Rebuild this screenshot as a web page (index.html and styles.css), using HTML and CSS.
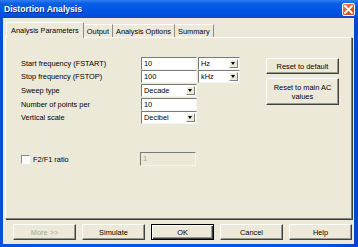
FILE: index.html
```html
<!DOCTYPE html>
<html>
<head>
<meta charset="utf-8">
<link rel="stylesheet" href="styles.css">
</head>
<body>
<div class="window">
  <div class="titlebar">
    <span class="title">Distortion Analysis</span>
    <span class="close"><svg width="9" height="9" viewBox="0 0 9 9"><path d="M1 1 L8 8 M8 1 L1 8" stroke="#fff" stroke-width="1.8" stroke-linecap="square"/></svg></span>
  </div>
  <div class="client">
    <div class="tabs">
      <div class="tab active">Analysis Parameters</div>
      <div class="tab">Output</div>
      <div class="tab">Analysis Options</div>
      <div class="tab">Summary</div>
    </div>
    <div class="panel">
      <div class="main">
        <div class="form">
          <div class="label">Start frequency (FSTART)</div>
          <div class="field">10</div>
          <div class="combo unit"><span>Hz</span><span class="arrow"></span></div>

          <div class="label">Stop frequency (FSTOP)</div>
          <div class="field">100</div>
          <div class="combo unit"><span>kHz</span><span class="arrow"></span></div>

          <div class="label">Sweep type</div>
          <div class="combo"><span>Decade</span><span class="arrow"></span></div>
          <div></div>

          <div class="label">Number of points per</div>
          <div class="field">10</div>
          <div></div>

          <div class="label">Vertical scale</div>
          <div class="combo"><span>Decibel</span><span class="arrow"></span></div>
          <div></div>
        </div>
        <div class="side">
          <div class="btn small">Reset to default</div>
          <div class="btn tall">Reset to main AC<br>values</div>
        </div>
      </div>
      <div class="ratio">
        <div class="check"><span class="box"></span><span>F2/F1 ratio</span></div>
        <div class="field disabled">1</div>
      </div>
    </div>
    <div class="buttons">
      <div class="btn bottom disabled-text">More &gt;&gt;</div>
      <div class="btn bottom">Simulate</div>
      <div class="btn bottom default">OK</div>
      <div class="btn bottom">Cancel</div>
      <div class="btn bottom">Help</div>
    </div>
  </div>
</div>
</body>
</html>
```

FILE: styles.css
```css
html, body {
  margin: 0;
  padding: 0;
  background: #ffffff;
}

body {
  font-family: "Liberation Sans", Arial, sans-serif;
  font-size: 7.4px;
  color: #000;
}

.window {
  width: 358px;
  height: 247px;
  background: linear-gradient(to right, #0a4fd6, #0054e3 10%, #0054e3 90%, #0846c8);
  display: flex;
  flex-direction: column;
  box-sizing: border-box;
}

.titlebar {
  height: 18px;
  flex: none;
  display: flex;
  align-items: center;
  justify-content: space-between;
  padding: 0 3px 0 4px;
  background: linear-gradient(to bottom, #2f7ff0 0%, #0a5ee6 20%, #0055e5 55%, #0050dc 85%, #0a48c8 100%);
}

.title {
  color: #fff;
  font-weight: bold;
  font-size: 8.6px;
  text-shadow: 1px 1px 0 #0a2d86;
}

.close {
  width: 13px;
  height: 13px;
  box-sizing: border-box;
  border: 1px solid #fff;
  border-radius: 2px;
  background: linear-gradient(to bottom right, #f08a60, #e05a2c 50%, #c8421e);
  display: flex;
  align-items: center;
  justify-content: center;
}

.client {
  flex: 1;
  margin: 0 4px 3px 3px;
  background: #ece9d8;
  padding: 4px 2px 4px 2px;
  display: flex;
  flex-direction: column;
}

.tabs {
  height: 15px;
  display: flex;
  align-items: flex-end;
  padding-left: 1px;
  position: relative;
  z-index: 1;
}

.tab {
  height: 13px;
  box-sizing: border-box;
  padding: 2px 3px 0 3px;
  border-top: 1px solid #fff;
  border-right: 1px solid #8a8a8a;
  white-space: nowrap;
  line-height: 10px;
}

.tab.active {
  height: 16px;
  margin-bottom: -1px;
  padding: 3px 4px 0 4px;
  border-left: 1px solid #fff;
  background: #ece9d8;
}

.panel {
  height: 182px;
  box-sizing: border-box;
  border-top: 1px solid #fff;
  border-left: 1px solid #fff;
  border-right: 1px solid #808080;
  border-bottom: 1px solid #808080;
  box-shadow: 1px 1px 0 #404040;
  padding: 19px 0 0 15px;
}

.main {
  display: flex;
}

.form {
  display: grid;
  grid-template-columns: 119px 56px 42px;
  grid-template-rows: 13px 14px 14px 13px 13px;
  column-gap: 1px;
  align-items: start;
}

.label {
  height: 13px;
  line-height: 13px;
  white-space: nowrap;
}

.field, .combo {
  height: 13px;
  box-sizing: border-box;
  background: #fff;
  border-top: 1px solid #7b7b7b;
  border-left: 1px solid #7b7b7b;
  border-right: 1px solid #f4f3ee;
  border-bottom: 1px solid #f4f3ee;
  padding-left: 2px;
  line-height: 11px;
}

.combo {
  display: flex;
  justify-content: space-between;
  padding-right: 1px;
}

.arrow {
  width: 9px;
  height: 9px;
  margin-top: 1px;
  box-sizing: border-box;
  background: #ece9d8;
  border-top: 1px solid #fff;
  border-left: 1px solid #fff;
  border-right: 1px solid #808080;
  border-bottom: 1px solid #808080;
  position: relative;
}

.arrow::after {
  content: "";
  position: absolute;
  left: 1px;
  top: 2px;
  border-left: 2.5px solid transparent;
  border-right: 2.5px solid transparent;
  border-top: 3px solid #000;
}

.side {
  margin-left: 26px;
  padding-top: 1px;
  display: flex;
  flex-direction: column;
  gap: 4px;
  width: 73px;
}

.btn {
  box-sizing: border-box;
  background: #ece9d8;
  border-top: 1px solid #fff;
  border-left: 1px solid #fff;
  border-right: 1px solid #404040;
  border-bottom: 1px solid #404040;
  box-shadow: inset -1px -1px 0 #9a988e;
  display: flex;
  align-items: center;
  justify-content: center;
  text-align: center;
  line-height: 9px;
}

.btn.small { height: 16px; }
.btn.tall { height: 27px; }

.ratio {
  margin-top: 28px;
  display: flex;
  align-items: center;
}

.check {
  width: 119px;
  display: flex;
  align-items: center;
  gap: 3px;
}

.box {
  width: 9px;
  height: 9px;
  box-sizing: border-box;
  background: #fbfbf8;
  border-top: 1px solid #8a8a8a;
  border-left: 1px solid #8a8a8a;
  border-right: 1px solid #fff;
  border-bottom: 1px solid #fff;
}

.field.disabled {
  width: 56px;
  height: 14px;
  background: #ece9d8;
  color: #a8a59a;
  line-height: 12px;
}

.buttons {
  margin-top: 5px;
  display: flex;
  justify-content: flex-end;
  gap: 6px;
}

.btn.bottom {
  width: 63px;
  height: 16px;
}

.btn.default {
  border: 1px solid #000;
  box-shadow: inset 1px 1px 0 #fff, inset -1px -1px 0 #404040, inset -2px -2px 0 #9a988e;
}

.disabled-text {
  color: #a8a59a;
}
```
